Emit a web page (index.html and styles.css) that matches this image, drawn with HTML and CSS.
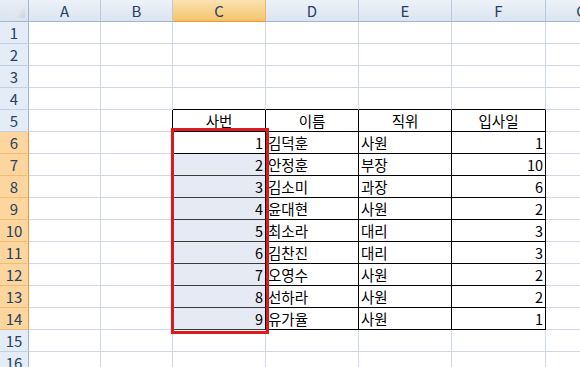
FILE: index.html
```html
<!DOCTYPE html>
<html lang="ko">
<head>
<meta charset="utf-8">
<title>Sheet</title>
<link rel="stylesheet" href="styles.css">
</head>
<body>
<div class="sheet">
  <div class="grid">
    <div class="corner"></div><div class="ch">A</div><div class="ch">B</div><div class="ch sel">C</div><div class="ch">D</div><div class="ch">E</div><div class="ch">F</div><div class="ch">G</div>

    <div class="rh">1</div><div class="c"></div><div class="c"></div><div class="c"></div><div class="c"></div><div class="c"></div><div class="c"></div><div class="c"></div>
    <div class="rh">2</div><div class="c"></div><div class="c"></div><div class="c"></div><div class="c"></div><div class="c"></div><div class="c"></div><div class="c"></div>
    <div class="rh">3</div><div class="c"></div><div class="c"></div><div class="c"></div><div class="c"></div><div class="c"></div><div class="c"></div><div class="c"></div>
    <div class="rh">4</div><div class="c"></div><div class="c"></div><div class="c bb"></div><div class="c bb"></div><div class="c bb"></div><div class="c bb"></div><div class="c"></div>
    <div class="rh">5</div><div class="c"></div><div class="c br"></div><div class="c t hd">사번</div><div class="c t hd">이름</div><div class="c t hd">직위</div><div class="c t hd">입사일</div><div class="c"></div>

    <div class="rh sel">6</div><div class="c"></div><div class="c br"></div><div class="c t num act">1</div><div class="c t txt">김덕훈</div><div class="c t txt">사원</div><div class="c t num">1</div><div class="c"></div>
    <div class="rh sel">7</div><div class="c"></div><div class="c br"></div><div class="c t num s">2</div><div class="c t txt">안정훈</div><div class="c t txt">부장</div><div class="c t num">10</div><div class="c"></div>
    <div class="rh sel">8</div><div class="c"></div><div class="c br"></div><div class="c t num s">3</div><div class="c t txt">김소미</div><div class="c t txt">과장</div><div class="c t num">6</div><div class="c"></div>
    <div class="rh sel">9</div><div class="c"></div><div class="c br"></div><div class="c t num s">4</div><div class="c t txt">윤대현</div><div class="c t txt">사원</div><div class="c t num">2</div><div class="c"></div>
    <div class="rh sel">10</div><div class="c"></div><div class="c br"></div><div class="c t num s">5</div><div class="c t txt">최소라</div><div class="c t txt">대리</div><div class="c t num">3</div><div class="c"></div>
    <div class="rh sel">11</div><div class="c"></div><div class="c br"></div><div class="c t num s">6</div><div class="c t txt">김찬진</div><div class="c t txt">대리</div><div class="c t num">3</div><div class="c"></div>
    <div class="rh sel">12</div><div class="c"></div><div class="c br"></div><div class="c t num s">7</div><div class="c t txt">오영수</div><div class="c t txt">사원</div><div class="c t num">2</div><div class="c"></div>
    <div class="rh sel">13</div><div class="c"></div><div class="c br"></div><div class="c t num s">8</div><div class="c t txt">선하라</div><div class="c t txt">사원</div><div class="c t num">2</div><div class="c"></div>
    <div class="rh sel last">14</div><div class="c"></div><div class="c br"></div><div class="c t num s">9</div><div class="c t txt">유가율</div><div class="c t txt">사원</div><div class="c t num">1</div><div class="c"></div>

    <div class="rh">15</div><div class="c"></div><div class="c"></div><div class="c"></div><div class="c"></div><div class="c"></div><div class="c"></div><div class="c"></div>
    <div class="rh">16</div><div class="c"></div><div class="c"></div><div class="c"></div><div class="c"></div><div class="c"></div><div class="c"></div><div class="c"></div>
  </div>
  <div class="mark"></div>
</div>
</body>
</html>
```

FILE: styles.css
```css
html, body {
  margin: 0;
  padding: 0;
  background: #ffffff;
  overflow: hidden;
}

.sheet {
  position: relative;
  width: 580px;
  height: 367px;
  overflow: hidden;
  font-family: "Noto Sans CJK KR", "Noto Sans", sans-serif;
  font-size: 14.5px;
}

.grid {
  display: grid;
  grid-template-columns: 29px 72px 72px 93px 93px 93px 94px 72px;
  grid-auto-rows: 22px;
  width: 618px;
}

.grid > div {
  box-sizing: border-box;
  display: flex;
  align-items: center;
  white-space: nowrap;
  overflow: hidden;
}

.corner {
  position: relative;
  background: linear-gradient(#e8eef7, #dae3ef);
  border-right: 1px solid #9eb6ce;
  border-bottom: 1px solid #9eb6ce;
}

.corner::after {
  content: "";
  position: absolute;
  left: 11px;
  top: 6px;
  width: 14px;
  height: 12px;
  background: linear-gradient(135deg, #ffffff, #c9d2de);
  clip-path: polygon(100% 0, 100% 100%, 0 100%);
}

.ch {
  justify-content: center;
  color: #27415f;
  background: linear-gradient(#edf2f9, #dbe4f0);
  border-right: 1px solid #b9c9dd;
  border-bottom: 1px solid #9eb6ce;
  font-size: 15px;
}

.ch.sel {
  background: linear-gradient(#fae2b2, #f4c46a);
  border-right-color: #f2b45c;
  border-bottom-color: #f29536;
}

.rh {
  justify-content: center;
  color: #27415f;
  background: #e4ecf7;
  border-right: 1px solid #9eb6ce;
  border-bottom: 1px solid #c2d0e2;
  font-size: 15px;
}

.rh.sel {
  background: #fcd69e;
  border-right-color: #f29536;
  border-bottom-color: #efbd74;
}

.c {
  border-right: 1px solid #d0d7e5;
  border-bottom: 1px solid #d0d7e5;
  color: #000000;
}

.bb {
  border-bottom-color: #000000;
}

.br {
  border-right-color: #000000;
}

.t {
  border-right-color: #000000;
  border-bottom-color: #000000;
}

.hd {
  justify-content: center;
}

.txt {
  justify-content: flex-start;
  padding-left: 2px;
}

.num {
  justify-content: flex-end;
  padding-right: 2px;
}

.s {
  background: #e6eaf4;
  border-bottom-color: #3c3c3c;
}

.act {
  background: #ffffff;
}

.mark {
  position: absolute;
  left: 171px;
  top: 128px;
  width: 98px;
  height: 206px;
  box-sizing: border-box;
  border: 3px solid #dd1a1f;
}
```
